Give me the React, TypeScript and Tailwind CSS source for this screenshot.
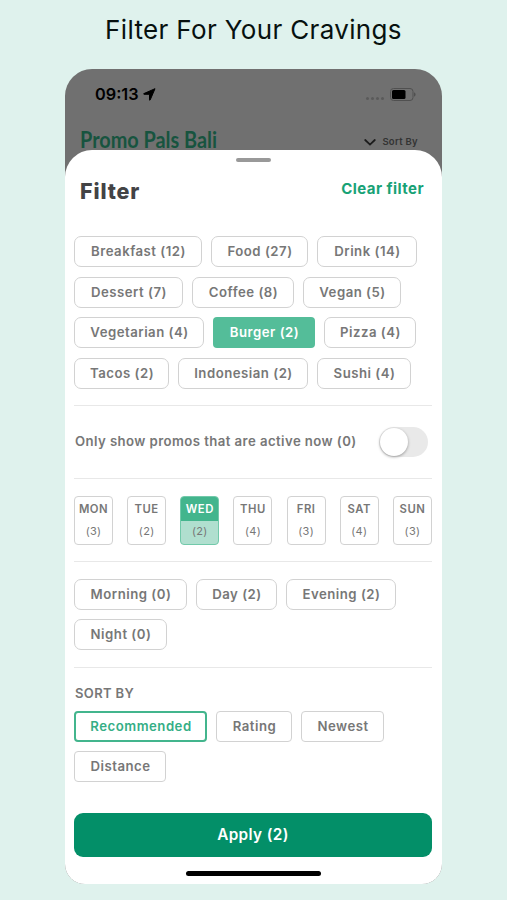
import React, { useState } from "react";
import clsx from "clsx";

interface Option {
  label: string;
  width: string;
}

interface Day {
  name: string;
  count: number;
}

const CATEGORIES: Option[] = [
  { label: "Breakfast (12)", width: "w-[128px]" },
  { label: "Food (27)", width: "w-[97px]" },
  { label: "Drink (14)", width: "w-[100px]" },
  { label: "Dessert (7)", width: "w-[109px]" },
  { label: "Coffee (8)", width: "w-[102px]" },
  { label: "Vegan (5)", width: "w-[98px]" },
  { label: "Vegetarian (4)", width: "w-[130px]" },
  { label: "Burger (2)", width: "w-[102px]" },
  { label: "Pizza (4)", width: "w-[92px]" },
  { label: "Tacos (2)", width: "w-[95px]" },
  { label: "Indonesian (2)", width: "w-[130px]" },
  { label: "Sushi (4)", width: "w-[94px]" },
];

const DAYS: Day[] = [
  { name: "MON", count: 3 },
  { name: "TUE", count: 2 },
  { name: "WED", count: 2 },
  { name: "THU", count: 4 },
  { name: "FRI", count: 3 },
  { name: "SAT", count: 4 },
  { name: "SUN", count: 3 },
];

const TIMES: Option[] = [
  { label: "Morning (0)", width: "w-[113px]" },
  { label: "Day (2)", width: "w-[81px]" },
  { label: "Evening (2)", width: "w-[110px]" },
  { label: "Night (0)", width: "w-[93px]" },
];

const SORTS: Option[] = [
  { label: "Recommended", width: "w-[133px]" },
  { label: "Rating", width: "w-[76px]" },
  { label: "Newest", width: "w-[83px]" },
  { label: "Distance", width: "w-[92px]" },
];

interface ChipProps {
  option: Option;
  className: string;
  onClick: () => void;
}

const Chip: React.FC<ChipProps> = ({ option, className, onClick }) => (
  <button
    onClick={onClick}
    className={clsx(
      "h-[31px] shrink-0 whitespace-nowrap pt-px pl-px text-[13.2px] font-semibold tracking-[0.5px]",
      option.width,
      className
    )}
  >
    {option.label}
  </button>
);

const StatusBar = () => (
  <div className="flex h-[50px] items-center justify-between pl-[30px] pr-[26px]">
    <div className="flex items-center gap-1">
      <span className="text-[16.3px] font-semibold text-black">09:13</span>
      <svg className="h-[13px] w-[13px]" viewBox="0 0 13 13" fill="#000">
        <path
          d="M12 .7.900 5.600c-.4.2-.4.700.1.700h5.500v5.500c0 .5.5.6.7.1Z"
          stroke="#000"
          strokeLinejoin="round"
        />
      </svg>
    </div>
    <div className="flex items-center gap-[6px]">
      <div className="mt-2 flex gap-[2px]">
        {[0, 1, 2, 3].map((dot) => (
          <span key={dot} className="h-[3px] w-[3px] rounded-full bg-[#5a5a5a]" />
        ))}
      </div>
      <svg className="h-[13px] w-[26px]" viewBox="0 0 26 13" fill="none">
        <rect x=".5" y=".5" width="22.5" height="12" rx="3" stroke="#505050" />
        <rect x="2" y="2" width="13.5" height="9" rx="1.5" fill="#000" />
        <path d="M24 4.2v4.6c1-.5 1.6-1.3 1.6-2.3S25 4.700 24 4.200Z" fill="#505050" />
      </svg>
    </div>
  </div>
);

const App = () => {
  const [category, setCategory] = useState("Burger (2)");
  const [day, setDay] = useState("WED");
  const [time, setTime] = useState<string | null>(null);
  const [sort, setSort] = useState("Recommended");
  const [activeOnly, setActiveOnly] = useState(false);

  const clearFilter = () => {
    setCategory("");
    setDay("");
    setTime(null);
    setActiveOnly(false);
  };

  return (
    <div className="h-[900px] w-[507px] overflow-hidden bg-[#dff2ed] font-[Inter,sans-serif]">
      <h1 className="h-[69px] pt-[12px] text-center text-[26px] leading-9 font-normal tracking-[0.35px] text-[#07110f]">
        Filter For Your Cravings
      </h1>

      <div className="ml-[65px] h-[815px] w-[377px] overflow-hidden rounded-t-[27px] rounded-b-[20px] bg-[#707070]">
        <div className="h-[81px]">
          <StatusBar />
          <div className="flex h-[31px] items-end justify-between pl-[15px] pr-6">
            <span className="origin-left scale-x-[0.845] whitespace-nowrap font-[Lato,sans-serif] text-[23.5px] leading-[22px] font-bold text-[#17543f]">
              Promo Pals Bali
            </span>
            <div className="flex items-center gap-[6px] pb-px text-[#333]">
              <svg className="h-[7px] w-3" viewBox="0 0 12 7" fill="none">
                <path d="m1.200 1 4.800 4.600L10.800 1" stroke="#1c1c1c" strokeWidth="1.800" strokeLinecap="round" />
              </svg>
              <span className="text-[9.500px] leading-[14px] font-semibold tracking-[0.3px]">
                Sort By
              </span>
            </div>
          </div>
        </div>

        <div className="flex h-[734px] flex-col rounded-t-[27px] bg-white pr-[10px] pl-[9px] text-[#777]">
          <div className="mx-auto mt-2 h-[4px] w-[35px] shrink-0 rounded-full bg-[#999]" />

          <div className="mt-[10px] flex h-[34px] items-center justify-between pr-2 pl-[6px]">
            <h2 className="pt-[5px] text-[21.5px] font-extrabold tracking-[0.85px] text-[#434345]">
              Filter
            </h2>
            <button
              onClick={clearFilter}
              className="text-[15px] font-bold tracking-[0.45px] text-[#18a276]"
            >
              Clear filter
            </button>
          </div>

          <div className="mt-[30px] flex flex-wrap gap-x-[9px] gap-y-[9.500px]">
            {CATEGORIES.map((option) => (
              <Chip
                key={option.label}
                option={option}
                onClick={() => setCategory(option.label)}
                className={
                  category === option.label
                    ? "rounded-[4px] bg-[#54bd99] text-white"
                    : "rounded-[7px] border border-[#d2d2d2]"
                }
              />
            ))}
          </div>

          <div className="mt-[16.500px] flex h-[74px] shrink-0 items-center justify-between border-y border-[#e8e8e8] pr-1 pl-px">
            <span className="text-[13.200px] font-semibold tracking-[0.42px]">
              Only show promos that are active now (0)
            </span>
            <button
              onClick={() => setActiveOnly(!activeOnly)}
              className={clsx(
                "flex h-[30px] w-[49px] items-center rounded-full px-px",
                activeOnly ? "justify-end bg-[#54bd99]" : "bg-[#e9e9e9]"
              )}
            >
              <span className="h-7 w-7 rounded-full bg-white shadow-[0_1px_3px_rgba(0,0,0,0.35)]" />
            </button>
          </div>

          <div className="mt-[16.500px] flex justify-between">
            {DAYS.map(({ name, count }) => {
              const selected = day === name;
              return (
                <button
                  key={name}
                  onClick={() => setDay(name)}
                  className={clsx(
                    "flex h-[49px] w-[39px] flex-col overflow-hidden rounded-[4px] border",
                    selected
                      ? "border-[#72c9aa] bg-[#b0dfcf]"
                      : "border-[#d2d2d2]"
                  )}
                >
                  <span
                    className={clsx(
                      "flex h-6 w-full items-center justify-center pt-px text-[11.300px] font-semibold tracking-[0.5px]",
                      selected && "bg-[#43b58d] text-white"
                    )}
                  >
                    {name}
                  </span>
                  <span className="flex h-[22px] w-full items-center justify-center text-[11px] tracking-[0.3px]">
                    ({count})
                  </span>
                </button>
              );
            })}
          </div>

          <div className="mt-4 flex flex-wrap gap-x-[9px] gap-y-[9.500px] border-y border-[#e8e8e8] pt-[17px] pb-[16.500px]">
            {TIMES.map((option) => (
              <Chip
                key={option.label}
                option={option}
                onClick={() => setTime(option.label)}
                className={
                  time === option.label
                    ? "rounded-[4px] bg-[#54bd99] text-white"
                    : "rounded-[7px] border border-[#d2d2d2]"
                }
              />
            ))}
          </div>

          <h3 className="mt-[15px] pl-px text-[13px] leading-5 font-semibold tracking-[0.35px]">
            SORT BY
          </h3>
          <div className="mt-[8px] flex flex-wrap gap-x-[9px] gap-y-[9.500px]">
            {SORTS.map((option) => (
              <Chip
                key={option.label}
                option={option}
                onClick={() => setSort(option.label)}
                className={
                  sort === option.label
                    ? "rounded-[4px] border-2 border-[#43b58d] text-[#35ae86]"
                    : "rounded-[4px] border border-[#d2d2d2]"
                }
              />
            ))}
          </div>

          <button className="mt-[30.500px] h-[44px] shrink-0 rounded-[9px] bg-[#038f68] pt-px text-[15.300px] font-semibold tracking-[0.4px] text-white">
            Apply (2)
          </button>
          <div className="mx-auto mt-[14px] h-[5px] w-[135px] shrink-0 rounded-full bg-black" />
        </div>
      </div>
    </div>
  );
};

export default App;
